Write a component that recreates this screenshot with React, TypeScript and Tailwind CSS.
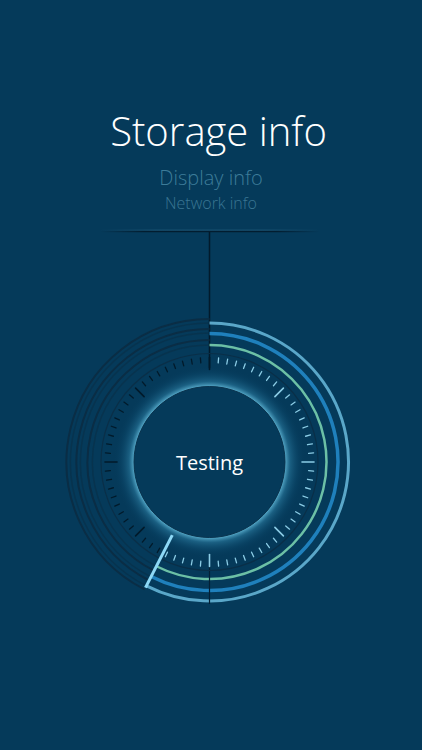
import React from "react";

const CX = 209.5;
const CY = 462;
const NEEDLE = 207;

function pt(r: number, deg: number): [number, number] {
  const a = (deg * Math.PI) / 180;
  return [CX + r * Math.sin(a), CY - r * Math.cos(a)];
}

function arc(r: number, a0: number, a1: number): string {
  const [x0, y0] = pt(r, a0);
  const [x1, y1] = pt(r, a1);
  const large = a1 - a0 > 180 ? 1 : 0;
  return `M ${x0.toFixed(2)} ${y0.toFixed(2)} A ${r} ${r} 0 ${large} 1 ${x1.toFixed(2)} ${y1.toFixed(2)}`;
}

function Gauge() {
  const ticks = [];
  for (let i = 0; i < 72; i++) {
    const deg = i * 5;
    const major = i % 9 === 0;
    const rOut = 104.5;
    const rIn = major ? 92.5 : 99.5;
    const [x0, y0] = pt(rIn, deg);
    const [x1, y1] = pt(rOut, deg);
    const lit = deg > 0 && deg <= 205;
    ticks.push(
      <line
        key={i}
        x1={x0}
        y1={y0}
        x2={x1}
        y2={y1}
        stroke={lit ? "#8ccde6" : "#021a2a"}
        strokeWidth={major ? 1.6 : 1.3}
        strokeLinecap="round"
      />
    );
  }
  const [nx0, ny0] = pt(82, NEEDLE);
  const [nx1, ny1] = pt(141, NEEDLE);

  return (
    <svg width={422} height={400} viewBox="0 220 422 400" className="block">
      <defs>
        <linearGradient id="hl" gradientUnits="userSpaceOnUse" x1="100" x2="320" y1="0" y2="0">
          <stop offset="0" stopColor="#021a2b" stopOpacity="0" />
          <stop offset="0.2" stopColor="#021a2b" stopOpacity="0.9" />
          <stop offset="0.8" stopColor="#021a2b" stopOpacity="0.9" />
          <stop offset="1" stopColor="#021a2b" stopOpacity="0" />
        </linearGradient>
        <linearGradient id="hl2" gradientUnits="userSpaceOnUse" x1="100" x2="320" y1="0" y2="0">
          <stop offset="0" stopColor="#3a7ea0" stopOpacity="0" />
          <stop offset="0.25" stopColor="#3a7ea0" stopOpacity="0.5" />
          <stop offset="0.75" stopColor="#3a7ea0" stopOpacity="0.5" />
          <stop offset="1" stopColor="#3a7ea0" stopOpacity="0" />
        </linearGradient>
        <radialGradient id="glow" cx={CX} cy={CY} r={96} gradientUnits="userSpaceOnUse">
          <stop offset="0" stopColor="#063a5a" stopOpacity="0" />
          <stop offset="0.77" stopColor="#063a5a" stopOpacity="0" />
          <stop offset="0.79" stopColor="#5fb6d6" stopOpacity="0.85" />
          <stop offset="0.84" stopColor="#2c7ea3" stopOpacity="0.55" />
          <stop offset="0.93" stopColor="#105276" stopOpacity="0.25" />
          <stop offset="1" stopColor="#063a5a" stopOpacity="0" />
        </radialGradient>
      </defs>

      {/* horizontal groove */}
      <line x1={100} y1={230.2} x2={320} y2={230.2} stroke="url(#hl2)" strokeWidth={1} />
      <line x1={100} y1={231.5} x2={320} y2={231.5} stroke="url(#hl)" strokeWidth={1.5} />
      {/* vertical line */}
      <line x1={CX} y1={232} x2={CX} y2={368} stroke="#021a2b" strokeWidth={1.5} />

      {/* dark left rings */}
      {[143, 133, 122].map((r) => (
        <path key={r} d={arc(r, NEEDLE, 360)} fill="none" stroke="#0a2d45" strokeWidth={2} />
      ))}
      {[139, 129, 117].map((r) => (
        <path key={"d" + r} d={arc(r, NEEDLE, 360)} fill="none" stroke="#0a2d45" strokeWidth={1.5} opacity={0.55} />
      ))}

      {/* coloured arcs */}
      <path d={arc(139, 0, NEEDLE)} fill="none" stroke="#5aa7c9" strokeWidth={3} />
      <path d={arc(128.5, 0, NEEDLE)} fill="none" stroke="#1f80bc" strokeWidth={3.5} />
      <path d={arc(117, 0, NEEDLE)} fill="none" stroke="#6cc0a6" strokeWidth={2.5} />

      {/* bottom vertical line */}
      <line x1={CX} y1={566} x2={CX} y2={604} stroke="#032035" strokeWidth={1.2} />

      {/* dial edge */}
      <circle cx={CX} cy={CY} r={108.5} fill="none" stroke="#0a2f48" strokeWidth={1.2} />

      {/* glow */}
      <circle cx={CX} cy={CY} r={96} fill="url(#glow)" />

      {ticks}

      {/* inner disc */}
      <circle cx={CX} cy={CY} r={75.5} fill="#053a5a" stroke="#0b3550" strokeWidth={1} />

      {/* needle */}
      <line x1={nx0} y1={ny0} x2={nx1} y2={ny1} stroke="#8dd8f6" strokeWidth={3} strokeLinecap="butt" />

      <text
        x={CX}
        y={470}
        textAnchor="middle"
        fill="#ffffff"
        fontSize={20}
        style={{ fontFamily: '"Open Sans", sans-serif' }}
      >
        Testing
      </text>
    </svg>
  );
}

export default function App() {
  return (
    <div
      className="w-full h-[750px] bg-[#053a5a] flex flex-col items-center overflow-hidden"
      style={{ fontFamily: '"Open Sans", "Liberation Sans", sans-serif' }}
    >
      <div className="h-[220px] w-full flex flex-col items-center pt-[107px]">
        <div className="text-[40px] leading-[48px] font-light text-white pl-[15px]">Storage info</div>
        <div className="mt-[10px] text-[20px] leading-[26px] font-light text-[#3d7c99]">Display info</div>
        <div className="text-[16px] leading-[24px] font-light text-[#3a7693]">Network info</div>
      </div>
      <Gauge />
    </div>
  );
}
